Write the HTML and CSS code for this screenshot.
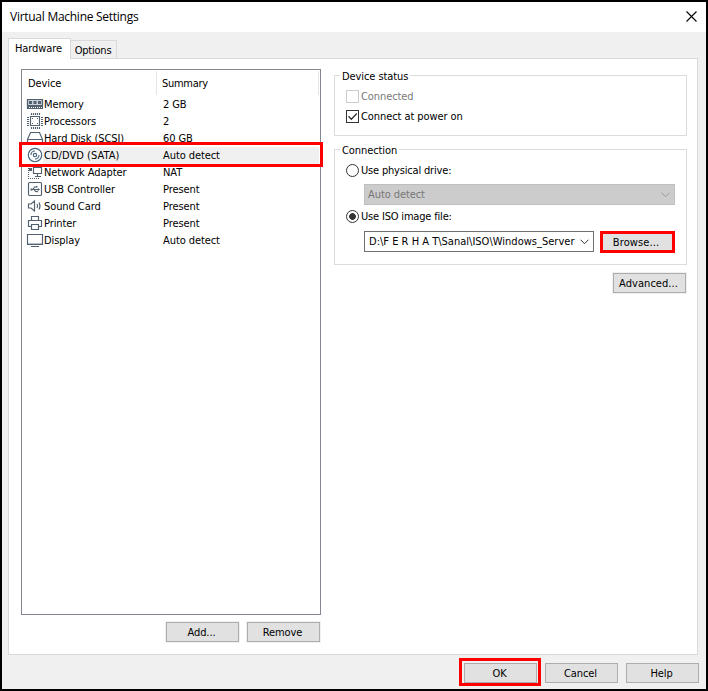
FILE: index.html
```html
<!DOCTYPE html>
<html lang="en">
<head>
<meta charset="utf-8">
<title>Virtual Machine Settings</title>
<link rel="stylesheet" href="styles.css">
</head>
<body>
<div class="window">
  <header class="titlebar">
    <span class="title">Virtual Machine Settings</span>
    <svg class="close" width="11" height="11" viewBox="0 0 11 11"><path d="M.5 .5l10 10M10.5 .5l-10 10"/></svg>
  </header>
  <nav class="tabs">
    <div class="tab active">Hardware</div>
    <div class="tab">Options</div>
  </nav>
  <main class="panel">
    <section class="devices">
      <div class="list">
        <div class="row head"><span class="c1">Device</span><span class="c2">Summary</span></div>
        <div class="row"><svg class="ic" viewBox="0 0 16 16"><path class="tint" d="M.5 3.5h15v6h-15z"/><path d="M.5 3.5h15v9h-15zM0 10.500h16"/><path class="dots" d="M1 11.500h14"/><path class="solid" d="M2 5h3v3H2zM6.500 5h3v3h-3zM11 5h3v3h-3z"/></svg><span class="c1">Memory</span><span class="c2">2 GB</span></div>
        <div class="row"><svg class="ic" viewBox="0 0 16 16"><path d="M3.500 3.500h9v9h-9zM4.500 0v2M6.500 0v2M8.500 0v2M10.500 0v2M12.500 0v2M4.500 14v2M6.500 14v2M8.500 14v2M10.500 14v2M12.500 14v2M0 4.500h2M0 6.500h2M0 8.500h2M0 10.500h2M0 12.500h2M14 4.500h2M14 6.500h2M14 8.500h2M14 10.500h2M14 12.500h2"/><path class="solid" d="M5 5h1v1H5zM10 5h1v1h-1zM5 10h1v1H5zM10 10h1v1h-1z"/></svg><span class="c1">Processors</span><span class="c2">2</span></div>
        <div class="row"><svg class="ic" viewBox="0 0 16 16"><path d="M.5 9.500L3.500 2.500h9l3 7v5H.5zM.5 9.500h15"/></svg><span class="c1">Hard Disk (SCSI)</span><span class="c2">60 GB</span></div>
        <div class="row selected"><svg class="ic disc" viewBox="0 0 16 16"><circle cx="8" cy="8" r="6.700"/><circle cx="8" cy="8" r="1.700"/><path d="M4 8A4 4 0 0 1 8 4M12 8A4 4 0 0 1 8 12"/></svg><span class="c1">CD/DVD (SATA)</span><span class="c2">Auto detect</span></div>
        <div class="row"><svg class="ic" viewBox="0 0 16 16"><path d="M6.500 3.500h8v6h-8zM10.500 10v3M8 12.500h6"/><path class="dots" d="M1.500 2v12.500H12M2 5.500h4"/><path class="solid" d="M2 4h3v3H2z"/></svg><span class="c1">Network Adapter</span><span class="c2">NAT</span></div>
        <div class="row"><svg class="ic" viewBox="0 0 16 16"><rect x="1.500" y="1.500" width="13" height="13" rx="1"/><path d="M4 8.500h8M6 8.500l1.500-2.500h2M7 8.500l1.500 2h2"/><path class="solid" d="M3.500 7.500h2v2h-2zM9 5h1.500v1.500H9zM9.500 9.700h1.500v1.500H9.500zM11 7l2 1.500-2 1.500z"/></svg><span class="c1">USB Controller</span><span class="c2">Present</span></div>
        <div class="row"><svg class="ic" viewBox="0 0 16 16"><path d="M1.500 6h2.500l3.500-3v10l-3.500-3H1.500zM10 6q1.200 2 0 4M12 4.500q2 3.500 0 7"/></svg><span class="c1">Sound Card</span><span class="c2">Present</span></div>
        <div class="row"><svg class="ic" viewBox="0 0 16 16"><path d="M4.500 5V1.500h7V5M4 11.500H1.500v-6h13v6H12M4.500 9.500h7v5h-7z"/></svg><span class="c1">Printer</span><span class="c2">Present</span></div>
        <div class="row"><svg class="ic" viewBox="0 0 16 16"><path d="M.5 2.500h15v10H.5zM4 14.500h8"/><path d="M1 11.500h14" opacity=".4"/></svg><span class="c1">Display</span><span class="c2">Auto detect</span></div>
      </div>
      <div class="actions"><div class="btn">Add...</div><div class="btn">Remove</div></div>
    </section>
    <section class="settings">
      <div class="group status">
        <div class="legend">Device status</div>
        <div class="opt disabled"><span class="check"></span>Connected</div>
        <div class="opt"><span class="check"><svg viewBox="0 0 11 11"><path d="M1.500 5.300l2.800 2.900L9.800 2.500"/></svg></span>Connect at power on</div>
      </div>
      <div class="group connection">
        <div class="legend">Connection</div>
        <div class="opt"><span class="radio"></span>Use physical drive:</div>
        <div class="combo off"><span>Auto detect</span><svg viewBox="0 0 9 6"><path d="M.5 .7l4 4 4-4"/></svg></div>
        <div class="opt iso"><span class="radio on"></span>Use ISO image file:</div>
        <div class="file">
          <div class="combo"><span class="path">D:\F E R H A T\Sanal\ISO\Windows_Server</span><svg viewBox="0 0 9 6"><path d="M.5 .7l4 4 4-4"/></svg></div>
          <div class="btn browse">Browse...</div>
        </div>
      </div>
      <div class="btn advanced">Advanced...</div>
    </section>
  </main>
  <footer class="footer">
    <div class="btn ok">OK</div><div class="btn">Cancel</div><div class="btn">Help</div>
  </footer>
</div>
</body>
</html>
```
FILE: styles.css
```css
*, *::after { box-sizing: border-box; }
body { margin: 0; font: 11px/13px "DejaVu Sans Condensed", "DejaVu Sans", sans-serif; font-stretch: condensed; letter-spacing: -.08px; color: #000; }
svg { fill: none; stroke: #333; display: block; flex: none; }
.window { width: 708px; height: 691px; border: 2px solid #000; background: #f0f0f0; display: flex; flex-direction: column; white-space: nowrap; }
.titlebar { height: 30px; background: #fff; display: flex; align-items: center; justify-content: space-between; padding: 0 9px 0 8px; }
.title { font: 12px/16px "Open Sans", "Noto Sans", sans-serif; letter-spacing: -.27px; }
.close { stroke: #000; stroke-width: 1.1; margin-top: -1px; }
.tabs { height: 26px; padding: 6px 0 0 6px; display: flex; align-items: flex-end; }
.tab { width: 46px; height: 18px; border: 1px solid #d9d9d9; border-width: 1px 1px 0 0; text-align: center; padding-top: 3px; letter-spacing: -.22px; }
.tab.active { width: 63px; height: 21px; margin-bottom: -1px; padding-right: 2px; border-left-width: 1px; background: #fff; position: relative; z-index: 1; letter-spacing: -.08px; }
.tab:not(.active) { margin-left: -1px; width: 47px; }
.panel { width: 690px; height: 597px; margin-left: 6px; border: 1px solid #d9d9d9; background: #fff; display: flex; gap: 13px; padding: 10px 0 0 12px; }
.devices { width: 300px; }
.list { height: 546px; border: 1px solid #828790; padding-top: 1px; }
.row { height: 17px; display: flex; align-items: center; padding-left: 5px; position: relative; }
.row.head { height: 24px; margin-bottom: 1px; padding-left: 6px; border-right: 1px solid #e5e5e5; margin-right: 1px; }
.head .c1 { width: 129px; height: 24px; line-height: 25px; border-right: 1px solid #e5e5e5; }
.head .c2 { margin-left: 5px; letter-spacing: -.3px; }
.ic { width: 16px; height: 16px; stroke: #53616e; stroke-width: 1.15; overflow: visible; margin-top: -2px; }
.ic .solid { fill: #53616e; stroke: none; }
.ic .tint { fill: #c9d1d8; }
.ic .dots { stroke-dasharray: 1 1; }
.ic.disc { stroke: #47677f; }
.row .c1 { flex: none; }
.row:not(.head) .c1 { width: 120px; padding-left: 1px; }
.selected { background: linear-gradient(90deg, #fff 21px, #f0f0f0 21px); margin-right: 1px; }
.selected .c1 { letter-spacing: .04px; }
.selected::after { content: ""; position: absolute; left: -3px; top: -5px; width: 304px; height: 25px; border: 3px solid #f00; z-index: 2; }
.btn { width: 73px; height: 20px; flex: none; border: 1px solid #adadad; background: #e1e1e1; outline: 1px solid #f0f0f0; text-align: center; line-height: 19px; padding-right: 2px; }
.actions { display: flex; justify-content: flex-end; gap: 8px; padding: 7px 1px 0 0; }
.settings { width: 353px; padding-top: 6px; }
.group { border: 1px solid #dcdcdc; position: relative; padding: 0 11px; }
.legend { position: absolute; left: 5px; top: -6px; background: #fff; padding: 0 2px; }
.status { height: 61px; padding-top: 13px; }
.opt { height: 14px; display: flex; align-items: center; gap: 2px; }
.status .opt + .opt { margin-top: 6px; }
.connection .opt { letter-spacing: -.18px; }
.disabled { color: #7a7a7a; }
.check, .radio { width: 13px; height: 13px; border: 1px solid #333; flex: none; }
.check svg { width: 11px; height: 11px; stroke-width: 1.3; }
.disabled .check { border-color: #ccc; }
.radio { border-radius: 50%; }
.radio.on { background: radial-gradient(circle, #333 3px, #fff 3.7px); }
.connection { height: 116px; margin-top: 13px; padding-top: 13px; }
.combo { height: 21px; border: 1px solid #707070; display: flex; align-items: center; justify-content: space-between; padding: 0 4px; }
.combo svg { width: 9px; height: 6px; }
.combo.off { width: 311px; background: #ccc; border-color: #bfbfbf; color: #777; margin: 7px 0 0 18px; padding-left: 3px; }
.off svg { stroke: #999; }
.iso { margin-top: 4px; }
.file { display: flex; margin: 8px 0 0 18px; gap: 9px; }
.file .combo { width: 230px; }
.path { letter-spacing: .01px; }
.browse { position: relative; width: 69px; height: 16px; margin: 3px 0 0; border: 0; padding-right: 3px; line-height: 17px; letter-spacing: .1px; outline: 3px solid #f00; }
.advanced { margin: 8px 0 0 279px; letter-spacing: .05px; }
.footer { display: flex; gap: 8px; justify-content: flex-end; padding: 8px 7px 0 0; }
.ok { position: relative; }
.ok::after { content: ""; position: absolute; left: -6px; top: -6px; width: 82px; height: 28px; border: 3px solid #f00; }
```
